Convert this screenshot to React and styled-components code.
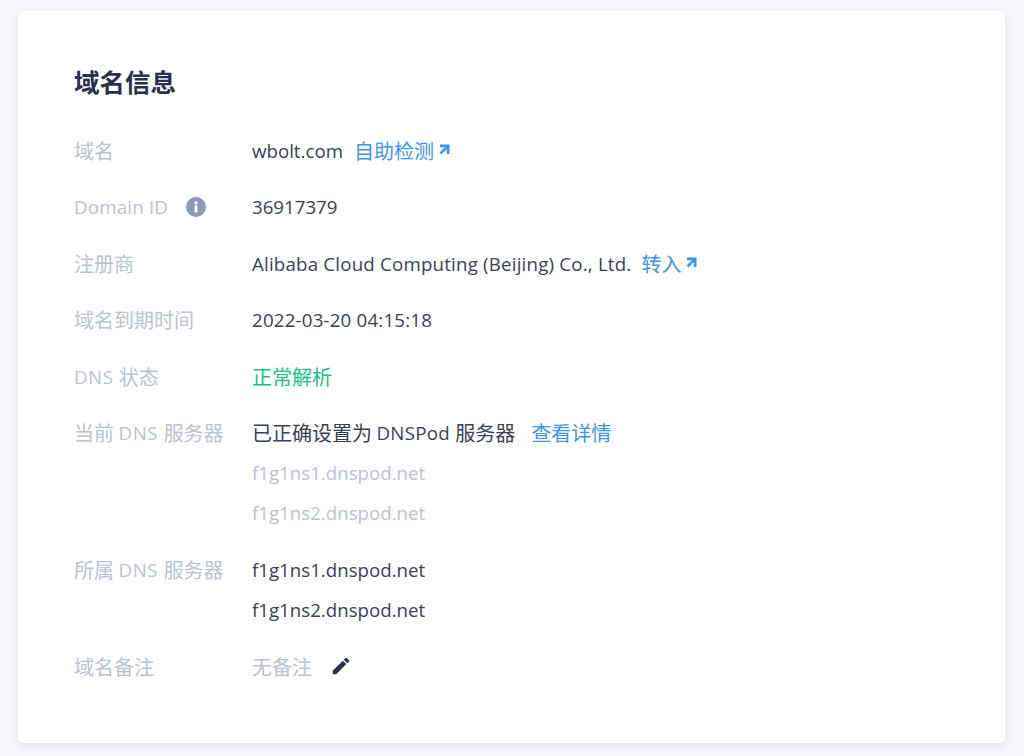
import React from 'react';
import styled, { createGlobalStyle } from 'styled-components';

const GlobalStyle = createGlobalStyle`
  html, body {
    margin: 0;
    padding: 0;
    background: #f5f7fa;
  }
  body {
    font-family: "Noto Sans CJK SC", "Noto Sans", sans-serif;
  }
`;

const Page = styled.div`
  height: 756px;
  padding: 11px 19px 0 18px;
  box-sizing: border-box;
  overflow: hidden;
`;
const Card = styled.section`
  height: 732px;
  box-sizing: border-box;
  padding: 50px 56px 0;
  background: #fff;
  border-radius: 5px;
  box-shadow: 0 3px 8px rgba(54, 66, 90, 0.1);
`;
const Title = styled.h2`
  margin: 0 0 29px;
  font-size: 25.5px;
  line-height: 40px;
  font-weight: 700;
  color: #29304d;
`;
const List = styled.div`
  display: flex;
  flex-direction: column;
  gap: 16.6px;
`;
const Row = styled.div`
  display: flex;
`;
const Label = styled.div`
  display: flex;
  align-items: center;
  width: 178px;
  height: 40px;
  flex-shrink: 0;
  font-size: 20px;
  white-space: pre;
  color: #bbc2d0;
`;
const Values = styled.div`
  display: flex;
  flex-direction: column;
`;
const Line = styled.div`
  display: flex;
  align-items: center;
  height: 40px;
  font-size: 20px;
  white-space: pre;
  color: ${p => p.$color || '#3a4155'};
`;
const En = styled.span`
  font-family: "Open Sans", "Noto Sans", sans-serif;
  font-size: 18.7px;
  letter-spacing: ${p => p.$wide || 0}px;
`;
const LinkText = styled.a`
  display: inline-flex;
  align-items: center;
  margin-left: ${p => p.$gap || 11}px;
  color: #3a96f0;
  text-decoration: none;
`;
const InfoIcon = styled.svg`
  width: 20px;
  height: 20px;
  margin-left: 18px;
`;
const ArrowIcon = styled.svg`
  width: 11px;
  height: 11px;
  margin-left: 5px;
  margin-top: -2px;
`;
const EditIcon = styled.svg`
  width: 22px;
  height: 22px;
  margin-left: 18px;
`;

const Arrow = () => (
  <ArrowIcon viewBox="0 0 11 11">
    <path d="M1 0.5h9.5V10H7.8V5L2.4 10.4 0.6 8.6 6 3.2H1z" fill="#3a96f0" />
  </ArrowIcon>
);

const App = () => (
  <>
    <GlobalStyle />
    <Page>
      <Card>
        <Title>域名信息</Title>
        <List>
          <Row>
            <Label>域名</Label>
            <Values>
              <Line>
                <En>wbolt.com</En>
                <LinkText href="#">自助检测<Arrow /></LinkText>
              </Line>
            </Values>
          </Row>
          <Row>
            <Label>
              <En $wide={0.2}>Domain ID</En>
              <InfoIcon viewBox="0 0 20 20">
                <circle cx="10" cy="10" r="10" fill="#8d9ab3" />
                <rect x="8.6" y="8.4" width="2.8" height="7" fill="#fff" />
                <circle cx="10" cy="5.8" r="1.6" fill="#fff" />
              </InfoIcon>
            </Label>
            <Values>
              <Line><En>36917379</En></Line>
            </Values>
          </Row>
          <Row>
            <Label>注册商</Label>
            <Values>
              <Line>
                <En $wide={0.2}>Alibaba Cloud Computing (Beijing) Co., Ltd.</En>
                <LinkText href="#" $gap={10}>转入<Arrow /></LinkText>
              </Line>
            </Values>
          </Row>
          <Row>
            <Label>域名到期时间</Label>
            <Values>
              <Line><En $wide={0.2}>2022-03-20 04:15:18</En></Line>
            </Values>
          </Row>
          <Row>
            <Label><En $wide={0.5}>DNS </En>状态</Label>
            <Values>
              <Line $color="#12c286">正常解析</Line>
            </Values>
          </Row>
          <Row>
            <Label>当前 <En $wide={0.6}>DNS </En>服务器</Label>
            <Values>
              <Line>
                已正确设置为 <En $wide={0.3}>DNSPod </En>服务器
                <LinkText href="#" $gap={16}>查看详情</LinkText>
              </Line>
              <Line $color="#bbc2d0"><En>f1g1ns1.dnspod.net</En></Line>
              <Line $color="#bbc2d0"><En>f1g1ns2.dnspod.net</En></Line>
            </Values>
          </Row>
          <Row>
            <Label>所属 <En $wide={0.6}>DNS </En>服务器</Label>
            <Values>
              <Line><En>f1g1ns1.dnspod.net</En></Line>
              <Line><En>f1g1ns2.dnspod.net</En></Line>
            </Values>
          </Row>
          <Row>
            <Label>域名备注</Label>
            <Values>
              <Line $color="#bbc2d0">
                无备注
                <EditIcon viewBox="0 0 24 24">
                  <path d="M3 17.25V21h3.75L17.81 9.94l-3.75-3.75L3 17.25zM20.71 7.04a1 1 0 0 0 0-1.41l-2.34-2.34a1 1 0 0 0-1.41 0l-1.83 1.83 3.75 3.75 1.83-1.83z" fill="#29304d" />
                </EditIcon>
              </Line>
            </Values>
          </Row>
        </List>
      </Card>
    </Page>
  </>
);

export default App;
